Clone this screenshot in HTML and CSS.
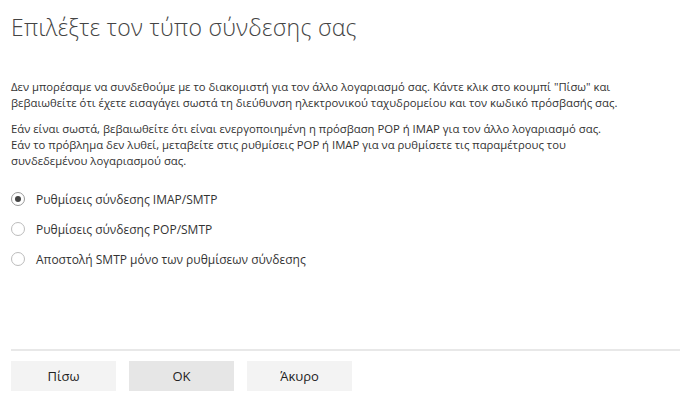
FILE: index.html
```html
<!DOCTYPE html>
<html lang="el">

<head>
    <meta charset="UTF-8">
    <title>Επιλέξτε τον τύπο σύνδεσης σας</title>
    <link rel="stylesheet" href="styles.css">
</head>

<body>
    <div class="page">
        <h1 class="title">Επιλέξτε τον τύπο σύνδεσης σας</h1>

        <div class="message">
            <p>Δεν μπορέσαμε να συνδεθούμε με το διακομιστή για τον άλλο λογαριασμό σας. Κάντε κλικ στο κουμπί "Πίσω" και<br>
                βεβαιωθείτε ότι έχετε εισαγάγει σωστά τη διεύθυνση ηλεκτρονικού ταχυδρομείου και τον κωδικό πρόσβασής σας.</p>
            <p>Εάν είναι σωστά, βεβαιωθείτε ότι είναι ενεργοποιημένη η πρόσβαση POP ή IMAP για τον άλλο λογαριασμό σας.<br>
                Εάν το πρόβλημα δεν λυθεί, μεταβείτε στις ρυθμίσεις POP ή IMAP για να ρυθμίσετε τις παραμέτρους του<br>
                συνδεδεμένου λογαριασμού σας.</p>
        </div>

        <div class="options">
            <label class="option">
                <input type="radio" name="connType" checked>
                <span class="dot"></span>
                Ρυθμίσεις σύνδεσης IMAP/SMTP
            </label>
            <label class="option">
                <input type="radio" name="connType">
                <span class="dot"></span>
                Ρυθμίσεις σύνδεσης POP/SMTP
            </label>
            <label class="option">
                <input type="radio" name="connType">
                <span class="dot"></span>
                Αποστολή SMTP μόνο των ρυθμίσεων σύνδεσης
            </label>
        </div>

        <div class="footer">
            <button class="btn">Πίσω</button>
            <button class="btn btn-default">OK</button>
            <button class="btn">Άκυρο</button>
        </div>
    </div>
</body>

</html>
```

FILE: styles.css
```css
body {
    margin: 0;
    background: #fff;
    color: #333;
    font-family: 'Open Sans', 'Noto Sans', sans-serif;
}

.page {
    display: flex;
    flex-direction: column;
    height: 408px;
    padding-left: 11px;
    box-sizing: border-box;
}

.title {
    margin: 12px 0 0;
    font-size: 23px;
    font-weight: 300;
    line-height: 30px;
    color: #444;
    letter-spacing: 0.3px;
}

.message {
    margin-top: 37px;
    font-size: 11.3px;
    line-height: 16px;
}

.message p {
    margin: 0 0 10px;
}

.options {
    margin-top: 5px;
    display: flex;
    flex-direction: column;
}

.option {
    display: flex;
    align-items: center;
    gap: 11px;
    height: 30px;
    font-size: 12px;
    cursor: pointer;
}

.option input {
    display: none;
}

.dot {
    width: 12px;
    height: 12px;
    border: 1px solid #bcbcbc;
    border-radius: 50%;
    display: flex;
    align-items: center;
    justify-content: center;
}

.option input:checked + .dot {
    border-color: #999;
}

.option input:checked + .dot::after {
    content: "";
    width: 6px;
    height: 6px;
    border-radius: 50%;
    background: #444;
}

.footer {
    margin-top: auto;
    margin-bottom: 17px;
    border-top: 2px solid #e8e8e8;
    padding-top: 10px;
    display: flex;
    gap: 13px;
}

.btn {
    width: 105px;
    height: 30px;
    border: none;
    background: #f3f3f3;
    color: #222;
    font-family: 'Open Sans', 'Noto Sans', sans-serif;
    font-size: 13px;
    cursor: pointer;
}

.btn-default {
    background: #e6e6e6;
}
```
